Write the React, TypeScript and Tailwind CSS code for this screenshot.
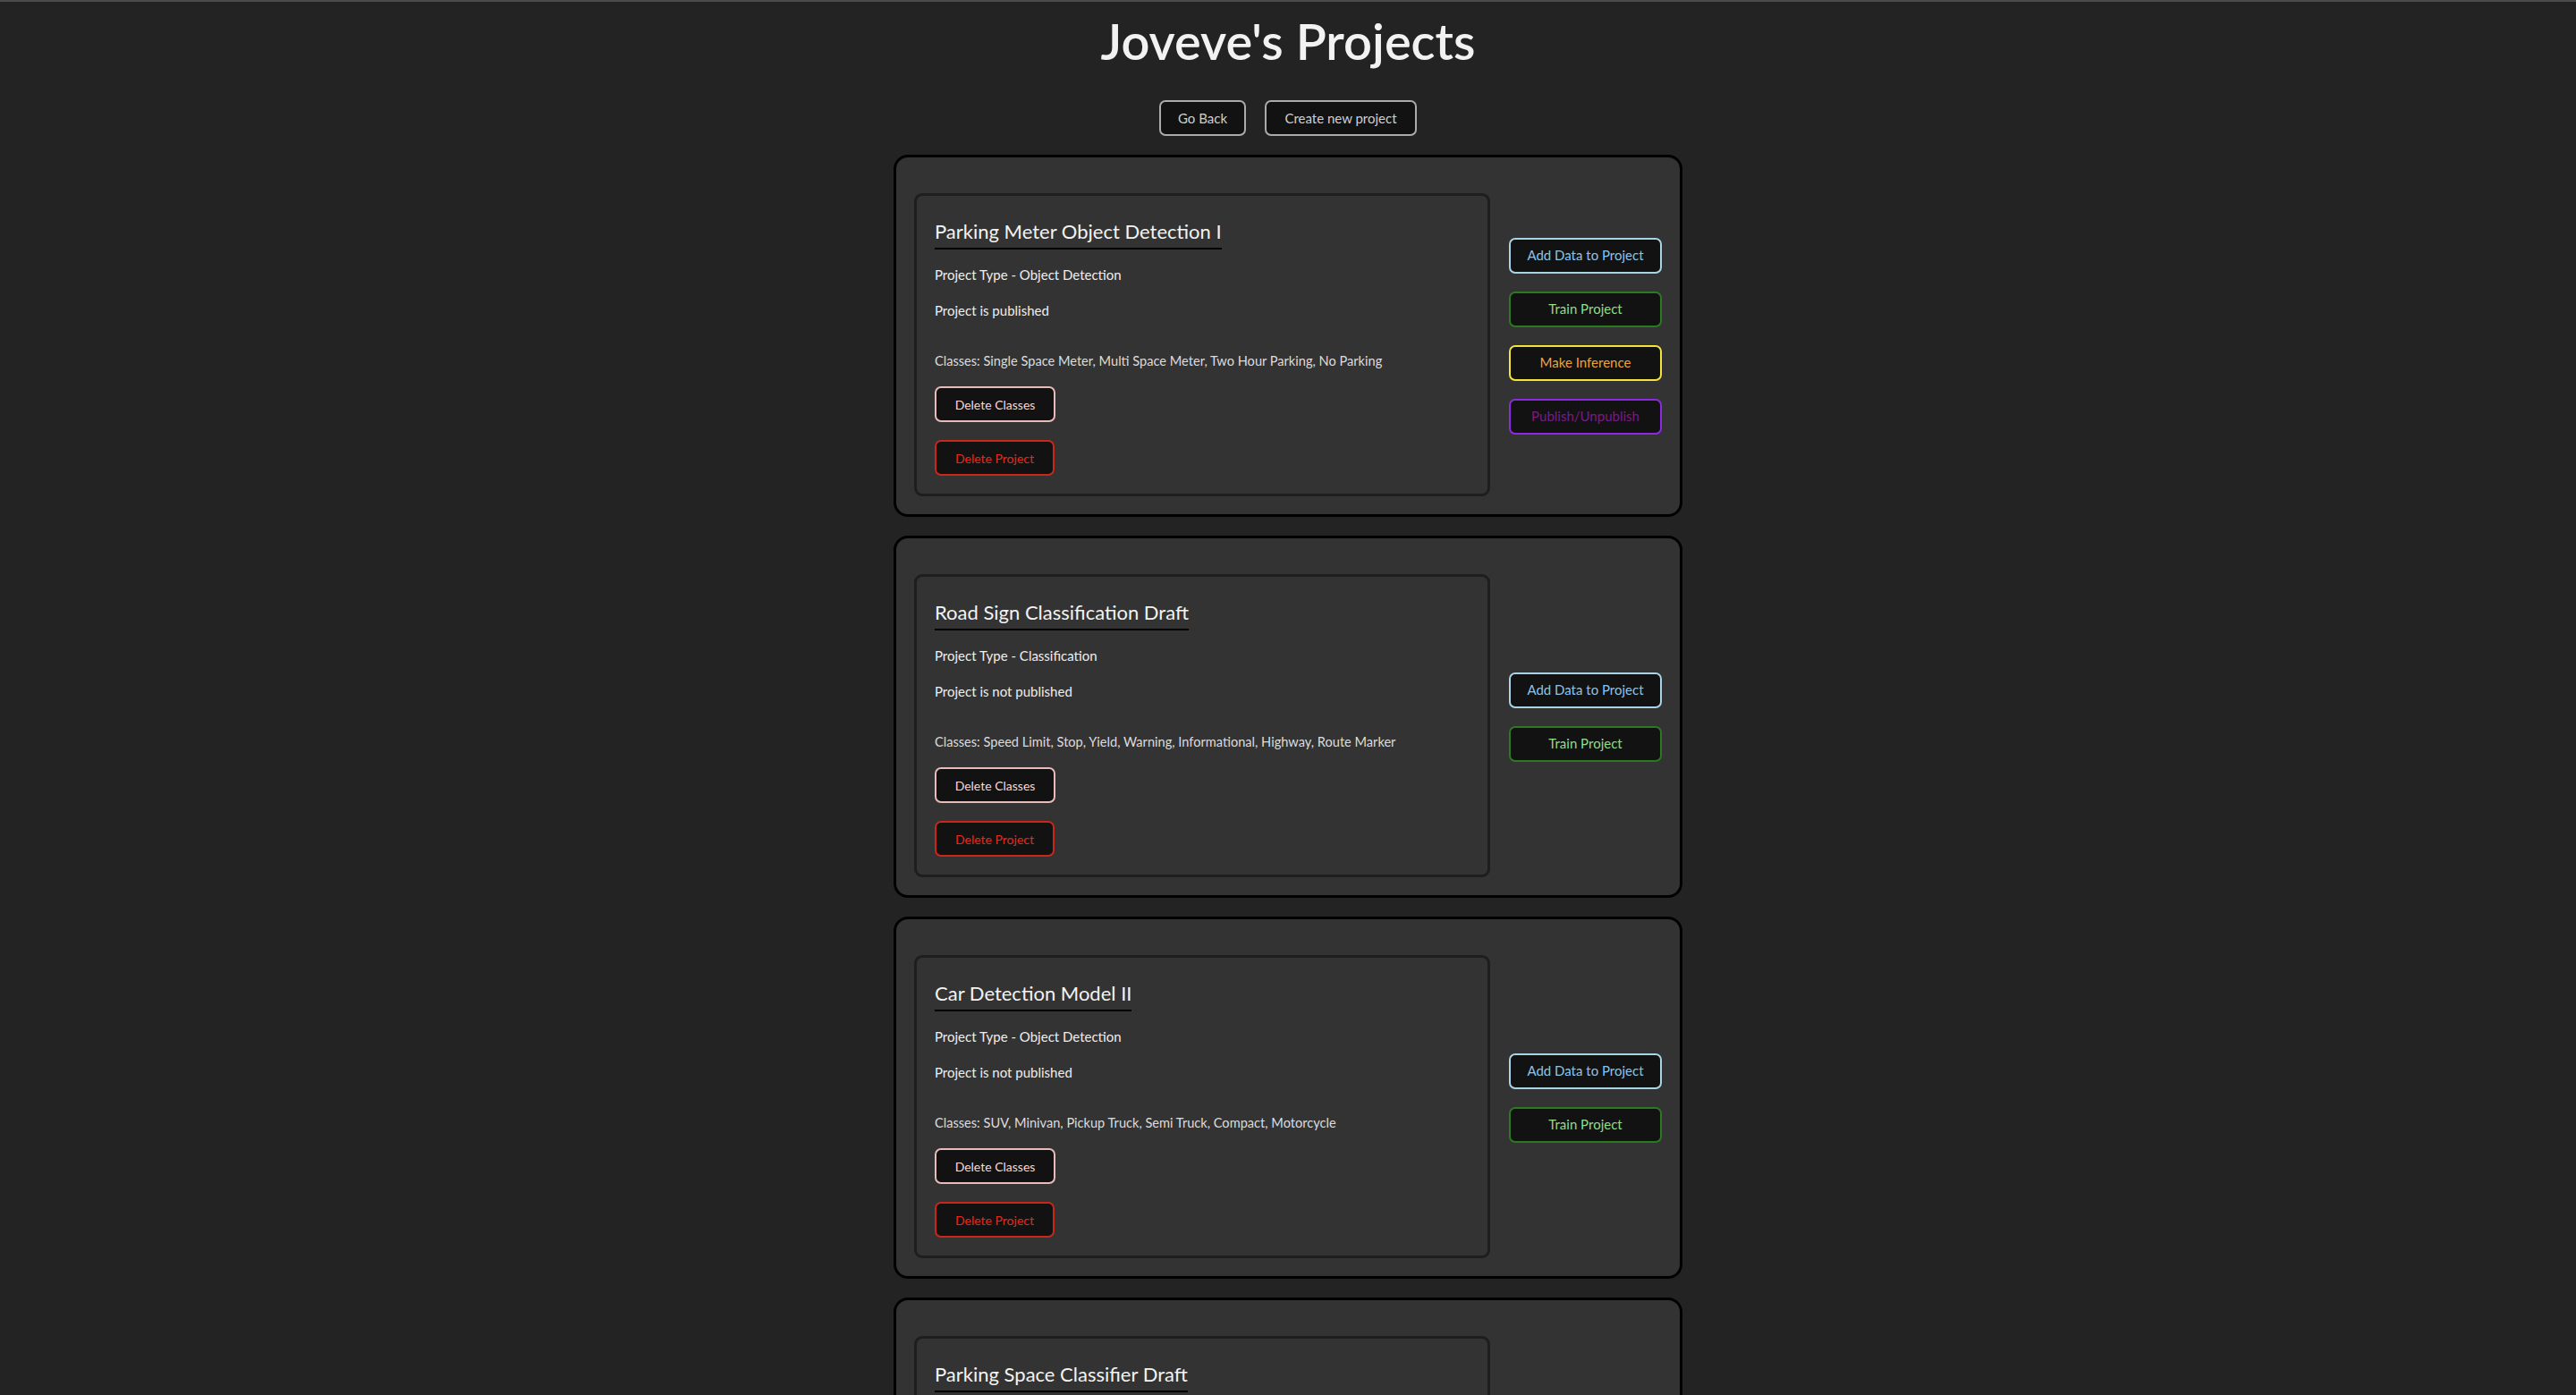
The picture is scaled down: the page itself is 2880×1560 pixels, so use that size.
import React from "react";

type Project = {
  name: string;
  type: string;
  published: boolean;
  classes: string;
  full: boolean;
};

const projects: Project[] = [
  {
    name: "Parking Meter Object Detection I",
    type: "Object Detection",
    published: true,
    classes: "Single Space Meter, Multi Space Meter, Two Hour Parking, No Parking",
    full: true,
  },
  {
    name: "Road Sign Classification Draft",
    type: "Classification",
    published: false,
    classes: "Speed Limit, Stop, Yield, Warning, Informational, Highway, Route Marker",
    full: false,
  },
  {
    name: "Car Detection Model II",
    type: "Object Detection",
    published: false,
    classes: "SUV, Minivan, Pickup Truck, Semi Truck, Compact, Motorcycle",
    full: false,
  },
  {
    name: "Parking Space Classifier Draft",
    type: "Classification",
    published: false,
    classes: "Empty, Occupied",
    full: false,
  },
];

function ProjectCard({ p }: { p: Project }) {
  return (
    <div className="flex items-center gap-[21px] w-[882px] rounded-[16px] border-[3px] border-black bg-[#333333] p-[20px]">
      <div className="mt-[20px] w-[644px] shrink-0 rounded-[9px] border-[3px] border-[#1e1e1e] bg-[#333333] px-[20px] pt-[26px] pb-[20px]">
        <h2 className="block w-fit border-b-2 border-black pb-[4px] text-[22px] leading-[28px] text-[#f2f2f2]">
          {p.name}
        </h2>
        <p className="mt-[18px] text-[15px] leading-[20px] text-[#eeeeee]">
          Project Type - {p.type}
        </p>
        <p className="mt-[20px] text-[15px] leading-[20px] text-[#eeeeee]">
          {p.published ? "Project is published" : "Project is not published"}
        </p>
        <p className="mt-[37px] text-[14.6px] leading-[20px] text-[#dcdcdc]">
          Classes: {p.classes}
        </p>
        <div className="mt-[18px] flex flex-col items-start gap-[20px]">
          <button className="h-[40px] w-[135px] rounded-[7px] border-2 border-[#e9bcbc] bg-[#121212] text-[14px] text-[#f6d8d8]">
            Delete Classes
          </button>
          <button className="h-[40px] w-[134px] rounded-[7px] border-2 border-[#c9271c] bg-[#121212] text-[14px] text-[#e8291c]">
            Delete Project
          </button>
        </div>
      </div>
      <div className="flex w-[171px] shrink-0 flex-col gap-[20px]">
        <button className="h-[40px] w-full rounded-[7px] border-2 border-[#a9d3e6] bg-[#121212] text-[15px] text-[#8cc4ea]">
          Add Data to Project
        </button>
        <button className="h-[40px] w-full rounded-[7px] border-2 border-[#2b7a22] bg-[#121212] text-[15px] text-[#92dd86]">
          Train Project
        </button>
        {p.full && (
          <>
            <button className="h-[40px] w-full rounded-[7px] border-2 border-[#f3e43c] bg-[#121212] text-[15px] text-[#eba43c]">
              Make Inference
            </button>
            <button className="h-[40px] w-full rounded-[7px] border-2 border-[#8a2be2] bg-[#121212] text-[15px] text-[#7c1a86]">
              Publish/Unpublish
            </button>
          </>
        )}
      </div>
    </div>
  );
}

export default function App() {
  return (
    <div
      className="min-h-screen border-t-2 border-[#4b4b4b] bg-[#232323] pb-[40px]"
      style={{ fontFamily: "Lato, 'Open Sans', sans-serif" }}
    >
      <div className="flex flex-col items-center">
        <h1 className="mt-[12px] text-[56px] font-semibold leading-[64px] text-[#f2f2f2]">
          Joveve&apos;s Projects
        </h1>
        <div className="mt-[34px] flex gap-[21px]">
          <button className="h-[40px] w-[97px] rounded-[7px] border-2 border-[#ababab] bg-[#121212] text-[15px] text-[#cfcfcf]">
            Go Back
          </button>
          <button className="h-[40px] w-[170px] rounded-[7px] border-2 border-[#ababab] bg-[#121212] text-[15px] text-[#cfcfcf]">
            Create new project
          </button>
        </div>
        <div className="mt-[21px] flex flex-col gap-[21px]">
          {projects.map((p) => (
            <ProjectCard key={p.name} p={p} />
          ))}
        </div>
      </div>
    </div>
  );
}
